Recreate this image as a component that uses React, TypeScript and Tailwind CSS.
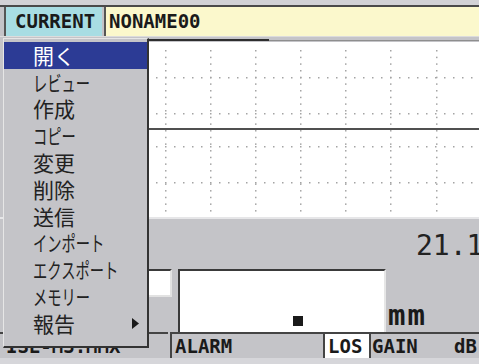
import React from 'react';

// kana entries are drawn narrow, like the gauge's half-width font
const menuItems: { label: string; narrow?: boolean }[] = [
  { label: '開く' },
  { label: 'レビュー', narrow: true },
  { label: '作成' },
  { label: 'コピー', narrow: true },
  { label: '変更' },
  { label: '削除' },
  { label: '送信' },
  { label: 'インポート', narrow: true },
  { label: 'エクスポート', narrow: true },
  { label: 'メモリー', narrow: true },
  { label: '報告' },
];

const WaveGrid: React.FC = () => {
  const cols = [16, 61, 106, 151, 196, 241, 287];
  const rows = [35, 71, 104, 140];
  const dots: React.ReactNode[] = [];
  rows.forEach((y) => {
    for (let x = 7; x < 330; x += 9) {
      dots.push(<rect key={`r${y}-${x}`} x={x} y={y} width={1.5} height={1.5} />);
    }
  });
  cols.forEach((x) => {
    for (let y = 8; y < 172; y += 6.67) {
      dots.push(<rect key={`c${x}-${y}`} x={x} y={y} width={1.5} height={1.5} />);
    }
  });
  return (
    <svg width="330" height="175" className="block">
      <g fill="#a4a4a4">{dots}</g>
      <rect x="0" y="86" width="330" height="2" fill="#505050" />
    </svg>
  );
};

const mono = "font-['DejaVu_Sans_Mono',monospace] font-bold";

export default function App() {
  return (
    <div className="relative w-[479px] h-[364px] overflow-hidden bg-[#c4c4c8] flex flex-col">
      {/* title bar */}
      <div className="h-[5px] bg-[#d2d2d6]" />
      <div className="h-[32px] border-t-2 border-[#4a4a4a] flex gap-[2px] pl-[4px] border-b border-b-[#dcdcdc]">
        <div className={`w-[98px] bg-[#a8dde3] border-l-2 border-[#555] flex items-center pl-[9px] text-[19px] text-[#1a1a1a] ${mono}`}>
          CURRENT
        </div>
        <div className={`flex-1 bg-[#fbf8cc] border-l-2 border-[#555] flex items-center pl-[3px] text-[19px] text-[#1a1a1a] ${mono}`}>
          NONAME00
        </div>
      </div>

      {/* waveform */}
      <div className="h-[2px]" />
      <div className="ml-[147px] flex h-[2px]">
        <div className="w-[122px] bg-[#2e2e2e]" />
        <div className="flex-1 bg-[#8e8e8e] mt-[1px]" />
      </div>
      <div className="h-[1px]" />
      <div className="ml-[147px] border-l-2 border-[#2e2e2e] bg-white h-[175px]">
        <WaveGrid />
      </div>
      <div className="h-[2px] bg-[#e6e6e8]" />

      {/* readout */}
      <div className="h-[113px] flex flex-col">
        <div className="h-[50px] pl-[416px] pt-[13px] whitespace-nowrap font-['DejaVu_Sans_Mono',monospace] text-[28px] leading-none text-[#222]">
          21.10
        </div>
        <div className="flex flex-1 items-start">
          <div className="ml-[100px] w-[72px] h-[28px] bg-white border-t-2 border-l-2 border-[#3a3a3a] border-r-2 border-b-2 border-r-[#e2e2e2] border-b-[#e2e2e2]" />
          <div className="ml-[6px] w-[208px] h-[63px] bg-white border-t-2 border-l-2 border-[#3a3a3a] border-r-2 border-r-[#e6e6e6] relative">
            <div className="absolute left-[113px] top-[45px] w-[10px] h-[10px] bg-[#1a1a1a]" />
          </div>
          <div className={`self-end ml-[2px] text-[29px] leading-none tracking-[2px] text-[#1a1a1a] pb-[2px] ${mono}`}>mm</div>
        </div>
      </div>

      {/* status bar */}
      <div className={`h-[26px] flex text-[19px] leading-none text-[#1a1a1a] ${mono}`}>
        <div className="w-[168px] border-t-2 border-[#444] flex items-center pl-[6px] whitespace-nowrap">ISE-M3.MMX</div>
        <div className="w-[153px] ml-[2px] border-t-2 border-l-2 border-[#444] flex items-center pl-[3px]">ALARM</div>
        <div className="w-[46px] bg-white border-t-2 border-l-2 border-[#444] flex items-center pl-[3px]">LOS</div>
        <div className="flex-1 border-t-2 border-l-2 border-[#444] flex items-center justify-between pl-[1px] pr-[2px]">
          <span>GAIN</span>
          <span>dB</span>
        </div>
      </div>
      <div className="flex-1 bg-[#d6d6da]" />

      {/* file menu */}
      <div className="absolute left-[3px] top-[38px] w-[146px] h-[310px] bg-[#c4c4c8] border-t border-l border-[#e6e6e6] border-r-2 border-b-2 border-r-[#333] border-b-[#333] pt-[3px] font-['Noto_Sans_CJK_JP',sans-serif] text-[21px] text-[#222]">
        {menuItems.map((item, i) => (
          <div
            key={item.label}
            className={`h-[26.8px] flex items-center pl-[29px] leading-none ${i === 0 ? 'bg-[#2c3b95] text-white' : ''}`}
          >
            <span className="flex-1 whitespace-nowrap">
              {item.narrow ? (
                <span className="inline-block origin-left scale-x-[0.68]">{item.label}</span>
              ) : (
                item.label
              )}
            </span>
            {item.label === '報告' && (
              <svg width="7" height="11" className="mr-[8px]">
                <polygon points="0,0 7,5.5 0,11" fill="#1a1a1a" />
              </svg>
            )}
          </div>
        ))}
      </div>
    </div>
  );
}
